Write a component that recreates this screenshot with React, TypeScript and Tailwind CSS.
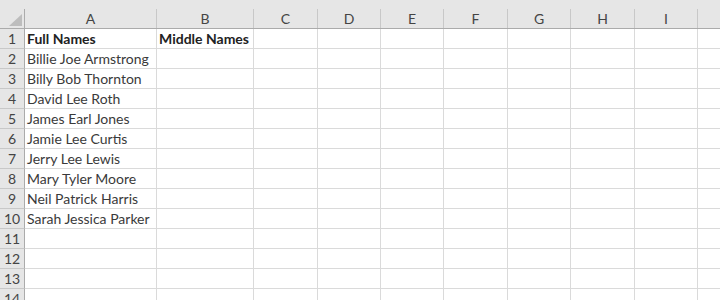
import React from "react";

const cols = [
  { name: "A", w: 132 },
  { name: "B", w: 97 },
  { name: "C", w: 64 },
  { name: "D", w: 63 },
  { name: "E", w: 63 },
  { name: "F", w: 64 },
  { name: "G", w: 63 },
  { name: "H", w: 64 },
  { name: "I", w: 63 },
  { name: "", w: 64 },
];

const data: Record<number, [string, string]> = {
  1: ["Full Names", "Middle Names"],
  2: ["Billie Joe Armstrong", ""],
  3: ["Billy Bob Thornton", ""],
  4: ["David Lee Roth", ""],
  5: ["James Earl Jones", ""],
  6: ["Jamie Lee Curtis", ""],
  7: ["Jerry Lee Lewis", ""],
  8: ["Mary Tyler Moore", ""],
  9: ["Neil Patrick Harris", ""],
  10: ["Sarah Jessica Parker", ""],
};

const rows = Array.from({ length: 14 }, (_, i) => i + 1);

export default function App() {
  return (
    <div
      className="w-[720px] h-[300px] overflow-hidden bg-white text-[#3a3a3a] text-[14px] leading-none"
      style={{ fontFamily: "Lato, 'Open Sans', sans-serif" }}
    >
      <div className="h-[9px] bg-[#e6e6e6]" />
      {/* column headers */}
      <div className="flex h-[20px] bg-[#e6e6e6] border-b border-[#ababab]">
        <div className="w-[25px] shrink-0 border-r border-[#ababab] relative">
          <svg className="absolute left-[9px] top-[5px]" width="13" height="12" viewBox="0 0 13 12">
            <polygon points="13,0 13,12 0,12" fill="#bdbdbd" />
          </svg>
        </div>
        {cols.map((c, i) => (
          <div
            key={i}
            className="shrink-0 border-r border-[#c8c8c8] flex items-center justify-center text-[#444] text-[14px]"
            style={{ width: c.w }}
          >
            {c.name}
          </div>
        ))}
      </div>
      {rows.map((r) => {
        const d = data[r];
        return (
          <div key={r} className="flex h-[20px]">
            <div className="w-[25px] shrink-0 bg-[#e6e6e6] border-r border-b border-[#c8c8c8] border-r-[#ababab] flex items-center justify-center text-[#444] text-[14px]">
              {r}
            </div>
            {cols.map((c, i) => (
              <div
                key={i}
                className={
                  "shrink-0 border-r border-b border-[#dadada] flex items-center pl-[2px] pt-[1px] whitespace-nowrap overflow-visible " +
                  (r === 1 ? "font-bold text-[#222]" : "")
                }
                style={{ width: c.w }}
              >
                {d && i < 2 ? d[i] : ""}
              </div>
            ))}
          </div>
        );
      })}
    </div>
  );
}
